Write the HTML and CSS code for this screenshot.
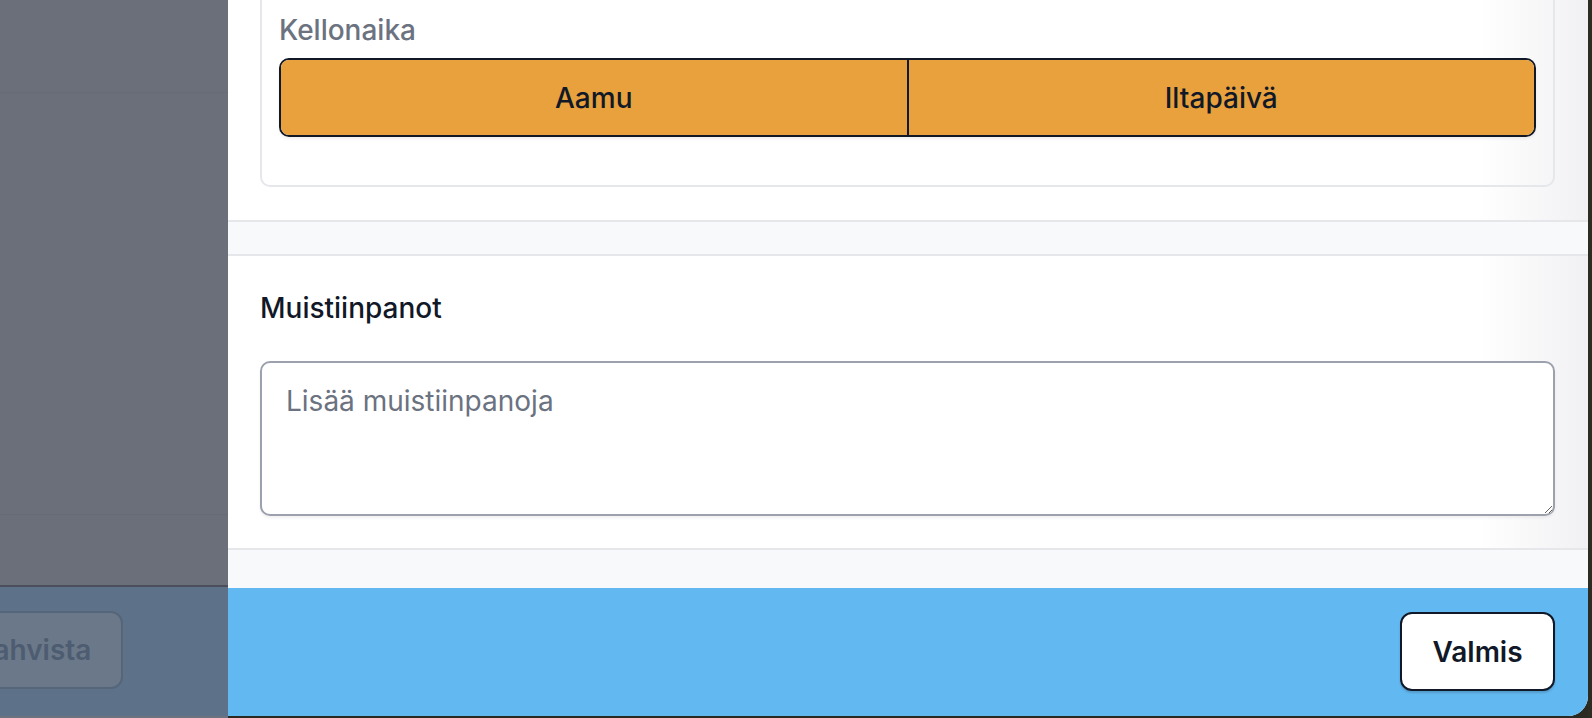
FILE: index.html
```html
<!DOCTYPE html>
<html>
  <head>
    <title>Muistiinpanot</title>
    <link rel="stylesheet" href="styles.css">
  </head>
  <body>
    <div class="screen">
      <div class="backdrop">
        <div class="backdrop-row backdrop-top"></div>
        <div class="backdrop-row backdrop-mid"></div>
        <div class="backdrop-row backdrop-rest"></div>
        <div class="backdrop-footer">
          <button class="btn-confirm" disabled>Vahvista</button>
        </div>
      </div>

      <div class="panel">
        <div class="panel-body">
          <div class="section section-time">
            <div class="card">
              <div class="label">Kellonaika</div>
              <div class="segmented">
                <button class="segment">Aamu</button>
                <button class="segment">Iltapäivä</button>
              </div>
            </div>
          </div>
          <div class="spacer"></div>
          <div class="section section-notes">
            <h2 class="section-title">Muistiinpanot</h2>
            <textarea class="notes" placeholder="Lisää muistiinpanoja"></textarea>
          </div>
          <div class="spacer spacer-last"></div>
        </div>
        <div class="panel-footer">
          <button class="btn-done">Valmis</button>
        </div>
      </div>

      <div class="desk"></div>
    </div>
  </body>
</html>
```

FILE: styles.css
```css
* {
  box-sizing: border-box;
}
body {
  margin: 0;
  background: #2a2a22;
  font-family: Inter, "Noto Sans", sans-serif;
  overflow: hidden;
}
.screen {
  display: flex;
  width: 1592px;
  height: 718px;
}

/* dimmed page behind the drawer */
.backdrop {
  width: 228px;
  height: 718px;
  display: flex;
  flex-direction: column;
  background: #6b6f7a;
  overflow: hidden;
}
.backdrop-row {
  border-bottom: 1px solid #676b76;
}
.backdrop-top {
  height: 93px;
}
.backdrop-mid {
  height: 422px;
}
.backdrop-rest {
  flex: 1;
  border-bottom: 2px solid #4a4f5b;
}
.backdrop-footer {
  height: 131px;
  background: #5d7288;
  padding-top: 24px;
  border-bottom: 2px solid #6c7280;
}
.btn-confirm {
  margin-left: -57px;
  width: 180px;
  height: 78px;
  border-radius: 12px;
  border: 2px solid #55657a;
  background: #6b7889;
  color: #4d5c70;
  font-family: inherit;
  font-size: 28px;
  font-weight: 600;
}

/* drawer */
.panel {
  width: 1360px;
  height: 716px;
  background: #fff;
  border-bottom-right-radius: 20px;
  overflow: hidden;
  display: flex;
  flex-direction: column;
}
.panel-body {
  flex: 1;
}
.section {
  padding: 0 33px 0 32px;
  background: linear-gradient(to right, #fff calc(100% - 110px), #f1f1f4);
}
.section-time {
  padding-bottom: 33px;
}
.card {
  border: 2px solid #e5e7eb;
  border-top: none;
  border-radius: 0 0 10px 10px;
  padding: 10px 17px 48px 17px;
}
.label {
  font-size: 28px;
  line-height: 40px;
  font-weight: 500;
  color: #6b7280;
  margin-bottom: 8px;
}
.segmented {
  display: flex;
  height: 79px;
  border: 2px solid #111827;
  border-radius: 10px;
  overflow: hidden;
  box-shadow: 0 2px 3px rgba(0, 0, 0, 0.06);
}
.segment {
  flex: 1;
  border: none;
  background: #e8a13c;
  color: #111827;
  font-family: inherit;
  font-size: 28px;
  font-weight: 500;
}
.segment + .segment {
  border-left: 2px solid #111827;
}
.spacer {
  height: 36px;
  background: #f8f9fb;
  border-top: 2px solid #e5e7eb;
  border-bottom: 2px solid #e5e7eb;
}
.spacer-last {
  height: 40px;
  border-bottom: none;
}
.section-notes {
  padding-top: 32px;
  padding-bottom: 32px;
}
.section-title {
  margin: 0 0 33px;
  font-size: 28px;
  line-height: 40px;
  font-weight: 500;
  color: #111827;
}
.notes {
  display: block;
  width: 100%;
  height: 155px;
  border: 2px solid #9ca1ad;
  border-radius: 10px;
  padding: 18px 24px;
  font-family: inherit;
  font-size: 28px;
  line-height: 40px;
  color: #111827;
  background: #fff;
  box-shadow: 0 2px 3px rgba(0, 0, 0, 0.06);
  resize: vertical;
}
.notes::placeholder {
  color: #6b7280;
}

.panel-footer {
  height: 128px;
  background: #62b8f0;
  display: flex;
  justify-content: flex-end;
  align-items: flex-start;
  padding: 24px 33px 0 0;
}
.btn-done {
  width: 155px;
  height: 79px;
  background: #fff;
  border: 2px solid #111827;
  border-radius: 12px;
  color: #111827;
  font-family: inherit;
  font-size: 28px;
  font-weight: 600;
  box-shadow: 0 2px 2px rgba(0, 0, 0, 0.15);
}

.desk {
  flex: 1;
  background: #2d2c22;
}
```
